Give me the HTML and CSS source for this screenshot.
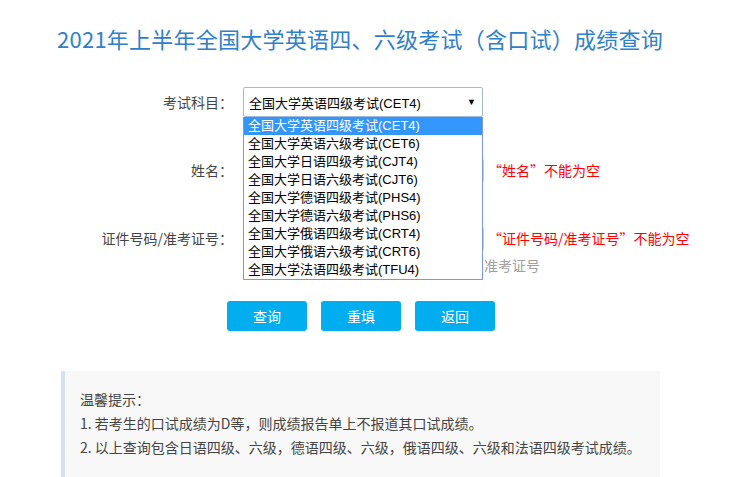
FILE: index.html
```html
<!DOCTYPE html>
<html lang="zh-CN">
<head>
<meta charset="utf-8">
<title>成绩查询</title>
<link rel="stylesheet" href="styles.css">
</head>
<body>
<div class="page">
  <h1 class="title">2021年上半年全国大学英语四、六级考试（含口试）成绩查询</h1>
  <div class="form">
    <div class="row">
      <label class="label">考试科目：</label>
      <div class="field">
        <div class="select">
          <span>全国大学英语四级考试(CET4)</span>
          <span class="arrow">▼</span>
        </div>
        <ul class="dropdown">
          <li class="active">全国大学英语四级考试(CET4)</li>
          <li>全国大学英语六级考试(CET6)</li>
          <li>全国大学日语四级考试(CJT4)</li>
          <li>全国大学日语六级考试(CJT6)</li>
          <li>全国大学德语四级考试(PHS4)</li>
          <li>全国大学德语六级考试(PHS6)</li>
          <li>全国大学俄语四级考试(CRT4)</li>
          <li>全国大学俄语六级考试(CRT6)</li>
          <li>全国大学法语四级考试(TFU4)</li>
        </ul>
      </div>
    </div>
    <div class="row">
      <label class="label">姓名：</label>
      <div class="field"><div class="input"></div></div>
      <span class="error">“姓名”不能为空</span>
    </div>
    <div class="row">
      <label class="label">证件号码/准考证号：</label>
      <div class="field"><div class="input"></div></div>
      <span class="error">“证件号码/准考证号”不能为空</span>
    </div>
    <div class="hint">准考证号</div>
    <div class="buttons">
      <button class="btn">查询</button>
      <button class="btn">重填</button>
      <button class="btn">返回</button>
    </div>
  </div>
  <div class="notice">
    <p>温馨提示：</p>
    <p>1. 若考生的口试成绩为D等，则成绩报告单上不报道其口试成绩。</p>
    <p>2. 以上查询包含日语四级、六级，德语四级、六级，俄语四级、六级和法语四级考试成绩。</p>
  </div>
</div>
</body>
</html>
```
FILE: styles.css
```css
html, body {
  margin: 0;
  padding: 0;
  background: #ffffff;
}
body {
  font-family: "Noto Sans CJK SC", "Microsoft YaHei", sans-serif;
  color: #333333;
}
.page {
  padding-left: 57px;
}
.title {
  margin: 23px 0 0;
  font-size: 22px;
  line-height: 30px;
  font-weight: normal;
  color: #2f80c8;
  letter-spacing: 0.25px;
}
.form {
  margin-top: 34px;
}
.row {
  display: flex;
  align-items: center;
  height: 30px;
  margin-bottom: 38px;
}
.row:nth-child(3) {
  margin-bottom: 2px;
}
.label {
  width: 176px;
  text-align: right;
  font-size: 14px;
  color: #444444;
  margin-right: 10px;
}
.field {
  position: relative;
  width: 240px;
}
.select {
  box-sizing: border-box;
  height: 30px;
  width: 240px;
  border: 1px solid #a3b9d9;
  border-radius: 2px;
  display: flex;
  align-items: center;
  justify-content: space-between;
  padding: 0 6px 0 5px;
  font-family: "Liberation Sans", "Noto Sans CJK SC", sans-serif;
  font-size: 13px;
  color: #000000;
}
.arrow {
  font-size: 9px;
}
.dropdown {
  position: absolute;
  left: 0;
  top: 30px;
  width: 240px;
  box-sizing: border-box;
  margin: 0;
  padding: 0;
  list-style: none;
  background: #ffffff;
  border: 1px solid #7a9cd3;
  border-top: none;
  font-family: "Liberation Sans", "Noto Sans CJK SC", sans-serif;
  font-size: 13px;
  color: #000000;
  z-index: 5;
}
.dropdown li {
  height: 18px;
  line-height: 18px;
  padding-left: 4px;
  white-space: nowrap;
}
.dropdown li.active {
  background: #3296fd;
  color: #ffffff;
}
.input {
  box-sizing: border-box;
  height: 27px;
  width: 241px;
  border: 1px solid #cccccc;
  border-radius: 4px;
  background: #ffffff;
}
.error {
  margin-left: 5px;
  font-size: 14px;
  color: #ff0000;
}
.hint {
  margin-left: 427px;
  font-size: 14px;
  line-height: 20px;
  color: #a0a0a0;
}
.buttons {
  display: flex;
  gap: 14px;
  margin-top: 26px;
  margin-left: 170px;
}
.btn {
  width: 80px;
  height: 30px;
  border: none;
  border-radius: 3px;
  background: #00adee;
  color: #ffffff;
  font-family: "Noto Sans CJK SC", sans-serif;
  font-size: 14px;
  padding: 0;
}
.notice {
  margin-top: 40px;
  margin-left: 4px;
  width: 599px;
  box-sizing: border-box;
  border-left: 4px solid #d3e1f0;
  background: #f8f8f8;
  padding: 16px 15px 20px;
}
.notice p {
  margin: 0;
  font-size: 14px;
  line-height: 24px;
  color: #444444;
}
```
